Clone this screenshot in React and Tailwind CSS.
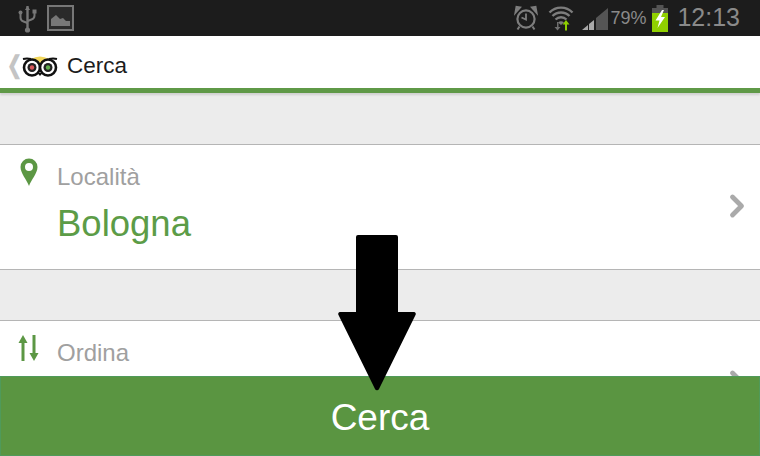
import { ChevronRight } from 'lucide-react';

const font = { sans: "font-['Liberation_Sans',Arial,sans-serif]" };

const UsbIcon = () => (
  <svg width="20" height="30" viewBox="0 0 20 30" className="text-[#777]" fill="none">
    <path d="M9.5 3V28" stroke="currentColor" strokeWidth="2.4" />
    <path d="M9.5 3l-2.6 4h5.2z" fill="currentColor" />
    <path d="M2.5 10v4.5q0 3 3 4l4 1.5M16.5 9v3.5q0 3-3 4l-4 1.5" stroke="currentColor" strokeWidth="2" />
    <circle cx="2.5" cy="9.5" r="2" fill="currentColor" />
    <rect x="14.5" y="6.5" width="4" height="4" fill="currentColor" />
    <circle cx="9.5" cy="27" r="2.6" fill="currentColor" />
  </svg>
);

const PictureIcon = () => (
  <svg width="27" height="26" viewBox="0 0 27 26" fill="none">
    <rect x="1" y="1" width="25" height="24" stroke="#777" strokeWidth="2" fill="#2a2a2a" />
    <path d="M4 21v-7l5-4 4 4 3-1 3 3h4v5z" fill="#777" />
  </svg>
);

const AlarmIcon = () => (
  <svg width="24" height="26" viewBox="0 0 24 26" fill="none" stroke="#7d7d7d">
    <circle cx="12" cy="14" r="8.6" strokeWidth="2.2" />
    <path d="M12 8.5V14.5L7.5 12.5" strokeWidth="1.8" />
    <path d="M1.5 7.5 6 2.5 2.5 2z M22.5 7.5 18 2.5 21.5 2z" strokeWidth="2" fill="#7d7d7d" />
    <path d="M5.5 21.5 3.5 24.5M18.5 21.5 20.5 24.5" strokeWidth="2" />
  </svg>
);

const WifiIcon = () => (
  <svg width="26" height="26" viewBox="0 0 26 26" fill="none">
    <path d="M1.5 7.5A16 16 0 0 1 24.5 7.5" stroke="#7d7d7d" strokeWidth="2.4" />
    <path d="M4.5 11A12 12 0 0 1 21.500 11" stroke="#7d7d7d" strokeWidth="2.4" />
    <path d="M7.500 14.500A8 8 0 0 1 18.500 14.500" stroke="#7d7d7d" strokeWidth="2.400" />
    <path d="M10 17.500A4.500 4.500 0 0 1 16 17.500L13 20z" fill="#7d7d7d" />
    <path d="M9 17v5h-2.500l3 3.500 3-3.500H10.500v-5z" fill="#6f6f6f" />
    <path d="M17 25.500v-6h-2.500l3.500-4.500 3.500 4.500H19v6z" fill="#8fd000" />
  </svg>
);

const SignalIcon = () => (
  <svg width="28" height="28" viewBox="0 0 28 28">
    <path d="M1 26 7 21V26z" fill="#a8a8a8" />
    <path d="M8 20 13 16V26H8z" fill="#a8a8a8" />
    <path d="M15 14 27 4V26H15z" fill="#555" />
  </svg>
);

const BatteryIcon = () => (
  <svg width="18" height="27" viewBox="0 0 18 27">
    <rect x="5.500" y="0" width="7" height="3" fill="#555" />
    <rect x="1" y="3" width="16" height="5" fill="#555" />
    <rect x="1" y="8" width="16" height="19" fill="#90d000" />
    <path d="M11 5 4.500 15.500H8.500L6.500 23 14 12H10L13 5z" fill="#fff" />
  </svg>
);

const OwlLogo = () => (
  <svg width="36" height="22" viewBox="0 0 36 22" fill="none">
    <path d="M9 4Q18-1 27 4L18 10z" fill="#f2d75c" />
    <path d="M1 4Q5 3 9 4M27 4Q31 3 35 4" stroke="#111" strokeWidth="2" />
    <circle cx="10" cy="12.500" r="8" fill="#fff" stroke="#111" strokeWidth="2.600" />
    <circle cx="26" cy="12.500" r="8" fill="#fff" stroke="#111" strokeWidth="2.600" />
    <circle cx="10" cy="12.500" r="4.500" fill="#222" />
    <circle cx="26" cy="12.500" r="4.500" fill="#222" />
    <circle cx="10" cy="12.500" r="2.200" fill="#d9595b" />
    <circle cx="26" cy="12.500" r="2.200" fill="#62ad4f" />
    <path d="M15.500 18 18 21 20.500 18z" fill="#111" />
  </svg>
);

const PinIcon = () => (
  <svg width="18" height="28" viewBox="0 0 18 28">
    <path fillRule="evenodd" d="M9 28C7 22 .5 15.500.5 9a8.500 8.500 0 0 1 17 0C17.500 15.500 11 22 9 28zM9 5a4 4 0 1 0 0 8 4 4 0 0 0 0-8z" fill="#5c9744" />
  </svg>
);

const SortIcon = () => (
  <svg width="22" height="28" viewBox="0 0 22 28" fill="#5c9744">
    <path d="M5 1 9.500 9H6.500V27H3.500V9H.5z" />
    <path d="M16 27 11.500 19H14.500V1H17.500V19H20.500z" />
  </svg>
);

const BigArrow = () => (
  <svg width="82" height="158" viewBox="0 0 82 158" fill="#000">
    <path d="M20 3a2 2 0 0 1 2-2h38a2 2 0 0 1 2 2V78H78a2 2 0 0 1 1.500 3L43 155a2.200 2.200 0 0 1-4 0L2.500 81A2 2 0 0 1 4 78H20z" />
  </svg>
);

const Row = ({ icon, label, value, height }) => (
  <div className={`bg-white flex items-start relative ${height}`}>
    <div className="w-[57px] flex justify-center pt-[13px] shrink-0">{icon}</div>
    <div className="flex-1 pt-[18px]">
      <div className="text-[24px] leading-[28px] text-[#a0a0a0]">{label}</div>
      {value && <div className="text-[36.5px] leading-[42px] mt-[12px] text-[#5c9c47]">{value}</div>}
    </div>
    <ChevronRight size={36} strokeWidth={3.2} className="text-[#aaaaaa] mr-[5px] mt-[43px] shrink-0" />
  </div>
);

export default function App() {
  return (
    <div className={`w-[760px] h-[456px] relative overflow-hidden bg-[#ececec] ${font.sans}`}>
      {/* barra di stato */}
      <div className="h-[36px] bg-[#1c1c1c] flex items-center pl-[18px] pr-[20px]">
        <UsbIcon />
        <div className="ml-[9px]"><PictureIcon /></div>
        <div className="ml-auto flex items-center">
          <AlarmIcon />
          <div className="ml-[10px]"><WifiIcon /></div>
          <div className="ml-[7px]"><SignalIcon /></div>
          <span className="text-[#8a8a8a] text-[18px] ml-[1px]">79%</span>
          <div className="ml-[5px]"><BatteryIcon /></div>
          <span className="text-[#8a8a8a] text-[25px] ml-[8px]">12:13</span>
        </div>
      </div>

      {/* titolo */}
      <div className="h-[57px] pt-[7px] bg-white border-b-[5px] border-[#5f9947] shadow-[0_2px_2px_rgba(0,0,0,0.12)] flex items-center pl-[6px] relative">
        <span className="text-[#c4c4c4] text-[24px] leading-none font-bold scale-x-75 -translate-y-[1px] w-[11px]">❮</span>
        <div className="ml-[5px]"><OwlLogo /></div>
        <span className="ml-[9px] text-[22.5px] text-[#1c1c1c]">Cerca</span>
      </div>

      <div className="h-[51px]" />
      <div className="border-y border-[#b5b5b5]">
        <Row icon={<PinIcon />} label="Località" value="Bologna" height="h-[124px]" />
      </div>
      <div className="h-[50px]" />
      <div className="border-t border-[#b5b5b5]">
        <Row icon={<SortIcon />} label="Ordina" height="h-[124px]" />
      </div>

      {/* pulsante fisso */}
      <div className="absolute left-0 right-0 bottom-0 h-[80px] bg-[#5a9541] border border-[#4f9a5a] flex items-center justify-center">
        <span className="text-white text-[37px] leading-none mt-[3px]">Cerca</span>
      </div>
      <div className="absolute left-[336px] top-[234px]"><BigArrow /></div>
    </div>
  );
}
